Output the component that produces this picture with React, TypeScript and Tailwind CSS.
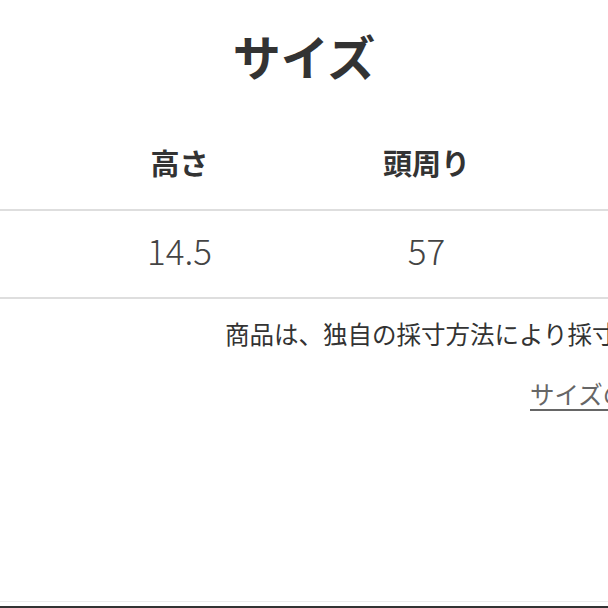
const jp = { fontFamily: '"Noto Sans CJK JP", "Noto Sans", sans-serif' };

export default function App() {
  return (
    <div style={jp} className="relative flex h-[608px] w-[608px] flex-col overflow-hidden bg-white text-[#333]">
      <h1 className="mt-[31px] text-center text-[48px] font-bold leading-none">サイズ</h1>

      <div className="mt-[69px] flex border-b-2 border-[#dedede] pl-[56px] pb-[32px] pt-[0px]">
        <div className="w-[247px] shrink-0 pt-[0px] text-center text-[29px] font-bold leading-none">高さ</div>
        <div className="w-[247px] shrink-0 text-center text-[29px] font-bold leading-none">頭周り</div>
      </div>

      <div className="flex border-b-2 border-[#dedede] pl-[56px] pt-[21px] pb-[30px]">
        <div className="w-[247px] shrink-0 text-center text-[35px] font-light leading-none text-[#444]">14.5</div>
        <div className="w-[247px] shrink-0 text-center text-[35px] font-light leading-none text-[#444]">57</div>
      </div>

      <p className="mt-[23px] whitespace-nowrap pl-[225px] text-[24.5px] leading-none">
        商品は、独自の採寸方法により採寸しています。
      </p>

      <a href="#" className="mt-[35px] whitespace-nowrap pl-[530px] text-[24.5px] leading-none text-[#666] underline underline-offset-[5px]">
        サイズの測り方について
      </a>

      <div className="mt-auto border-t border-[#ececec] pt-[4px]">
        <div className="h-[2px] bg-[#333]" />
      </div>
    </div>
  );
}
